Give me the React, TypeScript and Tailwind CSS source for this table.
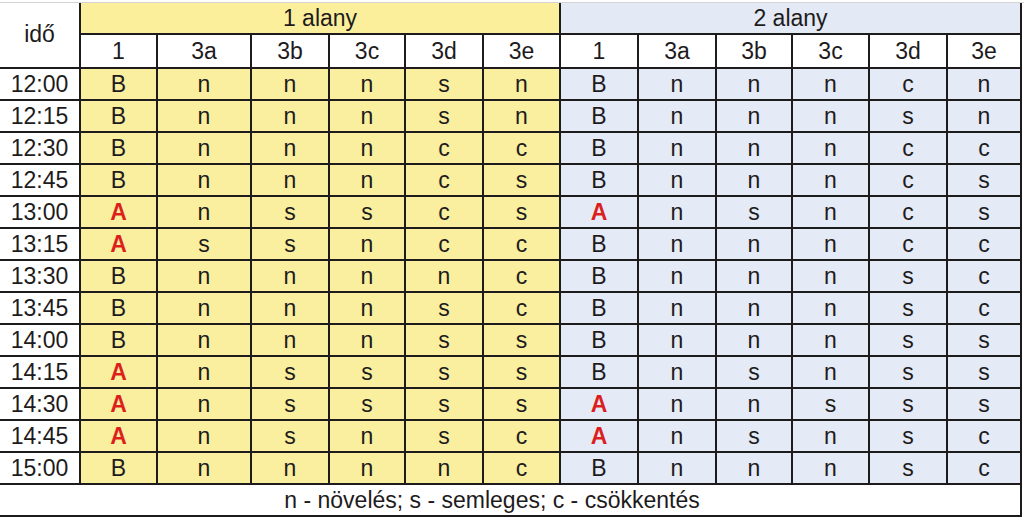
const rows: [string, string[], string[]][] = [
  ["12:00", ["B", "n", "n", "n", "s", "n"], ["B", "n", "n", "n", "c", "n"]],
  ["12:15", ["B", "n", "n", "n", "s", "n"], ["B", "n", "n", "n", "s", "n"]],
  ["12:30", ["B", "n", "n", "n", "c", "c"], ["B", "n", "n", "n", "c", "c"]],
  ["12:45", ["B", "n", "n", "n", "c", "s"], ["B", "n", "n", "n", "c", "s"]],
  ["13:00", ["A", "n", "s", "s", "c", "s"], ["A", "n", "s", "n", "c", "s"]],
  ["13:15", ["A", "s", "s", "n", "c", "c"], ["B", "n", "n", "n", "c", "c"]],
  ["13:30", ["B", "n", "n", "n", "n", "c"], ["B", "n", "n", "n", "s", "c"]],
  ["13:45", ["B", "n", "n", "n", "s", "c"], ["B", "n", "n", "n", "s", "c"]],
  ["14:00", ["B", "n", "n", "n", "s", "s"], ["B", "n", "n", "n", "s", "s"]],
  ["14:15", ["A", "n", "s", "s", "s", "s"], ["B", "n", "s", "n", "s", "s"]],
  ["14:30", ["A", "n", "s", "s", "s", "s"], ["A", "n", "n", "s", "s", "s"]],
  ["14:45", ["A", "n", "s", "n", "s", "c"], ["A", "n", "s", "n", "s", "c"]],
  ["15:00", ["B", "n", "n", "n", "n", "c"], ["B", "n", "n", "n", "s", "c"]],
];

const subCols = ["1", "3a", "3b", "3c", "3d", "3e"];

function Value({ v }: { v: string }) {
  if (v === "A") {
    return <span className="font-bold text-[#dc1f1c]">A</span>;
  }
  return <span>{v}</span>;
}

export default function App() {
  return (
    <div className="h-[519px] w-[1024px] bg-white pt-[2px] font-['Liberation_Sans',Arial,sans-serif] text-[23px] leading-none text-[#1e1b1c]">
      <div className="grid w-[1024px] grid-cols-[79px_77px_94px_78px_76px_78px_77px_78px_78px_76px_77px_78px_76px] grid-rows-[30px_34px_repeat(13,32px)_34px] border-t border-[#d4d4d4]">
        {/* idő header */}
        <div className="row-span-2 flex items-center justify-center bg-white pb-[2px]">idő</div>
        <div className="col-span-6 flex items-center justify-center border-l-2 border-[#1e1b1c] bg-[#fcef9c]">
          1 alany
        </div>
        <div className="col-span-6 flex items-center justify-center border-l-2 border-r-2 border-[#1e1b1c] bg-[#e3e9f5]">
          2 alany
        </div>

        {/* sub header */}
        {[...subCols, ...subCols].map((c, i) => (
          <div
            key={"h" + i}
            className={`flex items-center justify-center border-l-2 border-t-2 border-[#1e1b1c] bg-white ${
              i === 11 ? "border-r-2" : ""
            }`}
          >
            {c}
          </div>
        ))}

        {rows.map(([time, g1, g2]) => (
          <div key={time} className="contents">
            <div className="flex items-center justify-center border-t-2 border-[#1e1b1c] bg-white">
              {time}
            </div>
            {g1.map((v, i) => (
              <div
                key={"a" + i}
                className="flex items-center justify-center border-l-2 border-t-2 border-[#1e1b1c] bg-[#faef9f]"
              >
                <Value v={v} />
              </div>
            ))}
            {g2.map((v, i) => (
              <div
                key={"b" + i}
                className={`flex items-center justify-center border-l-2 border-t-2 border-[#1e1b1c] bg-[#e4eaf6] ${
                  i === 5 ? "border-r-2" : ""
                }`}
              >
                <Value v={v} />
              </div>
            ))}
          </div>
        ))}

        {/* legend */}
        <div className="col-span-13 flex items-center justify-center border-b-2 border-r-2 border-t-2 border-[#1e1b1c] bg-white pr-[36px]">
          n - növelés; s - semleges; c - csökkentés
        </div>
      </div>
    </div>
  );
}
